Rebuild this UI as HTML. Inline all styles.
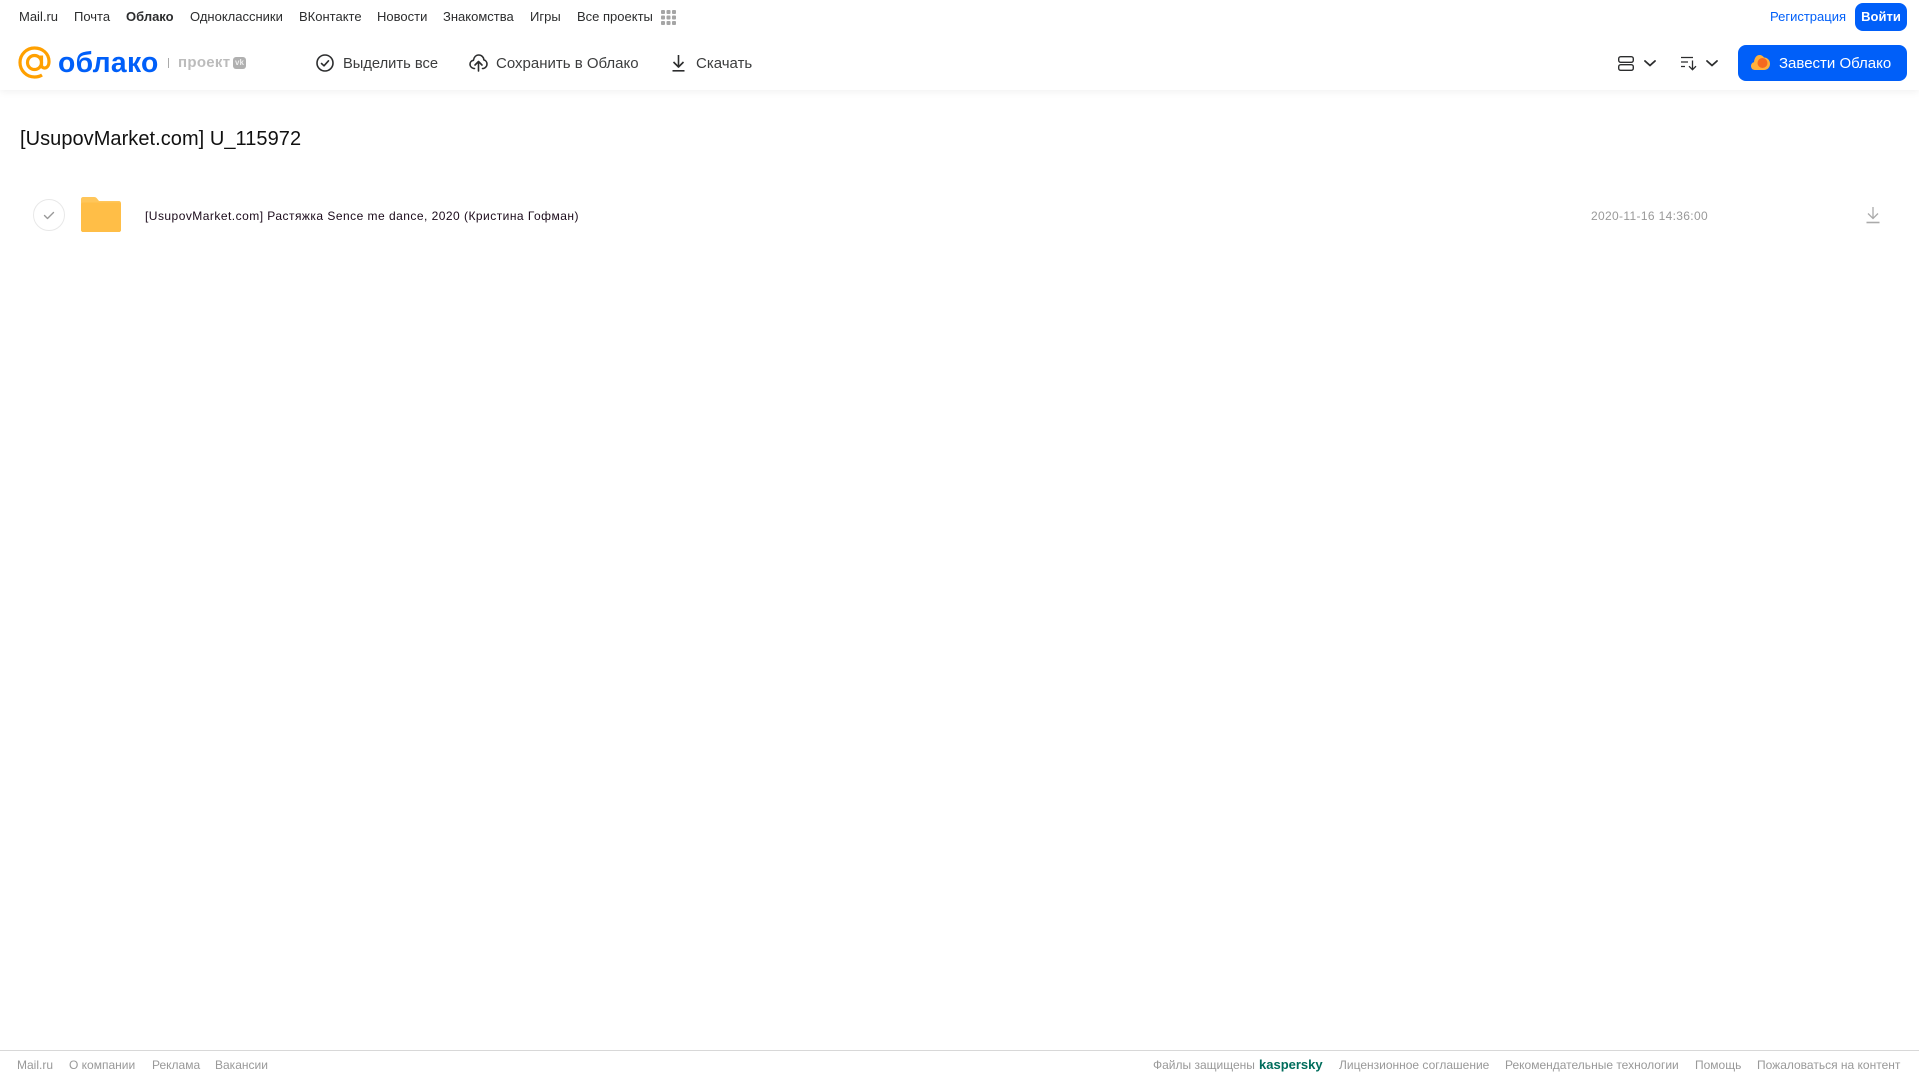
<!DOCTYPE html>
<html lang="ru">
<head>
<meta charset="utf-8">
<title>Облако</title>
<style>
html,body{margin:0;padding:0;background:#fff;width:1919px;height:1079px;overflow:hidden;font-family:"Liberation Sans",sans-serif;}
.t{position:absolute;white-space:nowrap;line-height:16px;}
.n{top:9px;font-size:13px;color:#2c2d2e;}
.a{top:55.500px;font-size:15px;color:#3c3d3e;}
.f{top:1057px;font-size:12px;color:#999;}
svg{position:absolute;overflow:visible;}
#hdr{position:absolute;left:0;top:0;width:1919px;height:90px;background:#fff;box-shadow:0 1px 8px rgba(0,0,0,.07);}
.btn{position:absolute;background:#005ff9;}
#fl{position:absolute;left:0;top:1050px;width:1919px;height:1px;background:#d8d8d8;}
</style>
</head>
<body>
<div id="hdr"></div>
<div class="t n" style="left:19px">Mail.ru</div>
<div class="t n" style="left:74px">Почта</div>
<div class="t n" style="left:126px;font-weight:bold">Облако</div>
<div class="t n" style="left:190px">Одноклассники</div>
<div class="t n" style="left:299px">ВКонтакте</div>
<div class="t n" style="left:377px">Новости</div>
<div class="t n" style="left:443px">Знакомства</div>
<div class="t n" style="left:530px">Игры</div>
<div class="t n" style="left:577px">Все проекты</div>
<svg style="left:661px;top:10px" width="15" height="15" viewBox="0 0 15 15" fill="#a5a5a5">
<rect x="0" y="0" width="4" height="4" rx="1"/><rect x="5.500" y="0" width="4" height="4" rx="1"/><rect x="11" y="0" width="4" height="4" rx="1"/>
<rect x="0" y="5.500" width="4" height="4" rx="1"/><rect x="5.500" y="5.500" width="4" height="4" rx="1"/><rect x="11" y="5.500" width="4" height="4" rx="1"/>
<rect x="0" y="11" width="4" height="4" rx="1"/><rect x="5.500" y="11" width="4" height="4" rx="1"/><rect x="11" y="11" width="4" height="4" rx="1"/>
</svg>
<div class="t n" style="left:1770px;color:#005ff9">Регистрация</div>
<div class="btn" style="left:1855px;top:3px;width:52px;height:28px;border-radius:8px"></div>
<div class="t n" style="left:1855px;width:52px;text-align:center;color:#fff;font-weight:bold">Войти</div>

<svg style="left:18px;top:46px" width="34" height="34" viewBox="0 0 34 34" fill="none" stroke="#ffa000" stroke-width="3.200">
<circle cx="16.500" cy="16.500" r="7"/>
<path d="M23.500 9.500V19c0 4.500 7.500 4.500 7.500-3.500C31 7.500 24.500 2 16.500 2S2 8.500 2 16.500 8.500 31 16.500 31c3 0 5.500-.7 7.500-2"/>
</svg>
<div class="t" style="left:58px;top:44px;font-size:28.300px;line-height:36px;font-weight:bold;color:#005ff9;letter-spacing:.3px">облако</div>
<div style="position:absolute;left:168px;top:58px;width:1px;height:10px;background:#aaa"></div>
<div class="t" style="left:178px;top:54.500px;font-size:15px;font-weight:bold;color:#bcbcbc;letter-spacing:.3px">проект</div>
<div style="position:absolute;left:233px;top:57px;width:13px;height:12px;border-radius:3px;background:#b0b0b0"></div>
<div class="t" style="left:233px;top:57px;width:13px;font-size:8px;line-height:12px;text-align:center;font-weight:bold;color:#eee">vk</div>

<svg style="left:316px;top:54px" width="18" height="18" viewBox="0 0 18 18" fill="none" stroke="#2c2d2e" stroke-width="1.600">
<circle cx="9" cy="9" r="8"/><path d="M5.500 9.500l2.500 2.300 4.500-5" stroke-linecap="round" stroke-linejoin="round"/>
</svg>
<div class="t a" style="left:343px;font-size:14.700px">Выделить все</div>
<svg style="left:469px;top:54px" width="19" height="18" viewBox="0 0 19 18" fill="none" stroke="#2c2d2e" stroke-width="1.600" stroke-linecap="round" stroke-linejoin="round">
<path d="M5.500 14.500H4.800C2.700 14 1 12.300 1 10.200c0-2 1.500-3.600 3.400-3.900C5 3.200 7 1 9.700 1c2.800 0 5 2.200 5.200 4.900 1.800.5 3.100 2.200 3.100 4.100 0 2.200-1.600 4-3.500 4.500h-1"/>
<path d="M9.500 17V8M6 11l3.500-3.500L13 11"/>
</svg>
<div class="t a" style="left:496px">Сохранить в Облако</div>
<svg style="left:671px;top:54px" width="15" height="18" viewBox="0 0 15 18" fill="none" stroke="#2c2d2e" stroke-width="1.600">
<path d="M7.500 1v11.500M2.500 8l5 5 5-5" stroke-linejoin="round"/><path d="M1.500 16.800h12"/>
</svg>
<div class="t a" style="left:696px">Скачать</div>

<svg style="left:1618px;top:56px" width="16" height="15" viewBox="0 0 16 15" fill="none" stroke="#2c2d2e" stroke-width="1.400">
<rect x=".7" y=".7" width="14.600" height="5.600" rx="2"/><rect x=".7" y="8.700" width="14.600" height="5.600" rx="2"/>
</svg>
<svg style="left:1644px;top:60px" width="12" height="7" viewBox="0 0 12 7" fill="none" stroke="#2c2d2e" stroke-width="1.800" stroke-linecap="round" stroke-linejoin="round"><path d="M1 1l5 4.500L11 1"/></svg>
<svg style="left:1681px;top:56px" width="16" height="15" viewBox="0 0 16 15" fill="none" stroke="#2c2d2e" stroke-width="1.300">
<path d="M0 1.500h12M0 6h7M0 10.500h4"/><path d="M11.500 4.500v9M8 10.200l3.500 3.500 3.500-3.500"/>
</svg>
<svg style="left:1706px;top:60px" width="12" height="7" viewBox="0 0 12 7" fill="none" stroke="#2c2d2e" stroke-width="1.800" stroke-linecap="round" stroke-linejoin="round"><path d="M1 1l5 4.500L11 1"/></svg>
<div class="btn" style="left:1738px;top:45px;width:169px;height:36px;border-radius:8px"></div>
<svg style="left:1751px;top:55px" width="19" height="15" viewBox="0 0 19 15">
<path d="M4 15C1.500 15 0 13.200 0 11c0-2 1.300-3.500 3-3.900C3.400 3 5.500 0 8.500 0c2 0 3.500 1 4.500 2.500 3.500 0 6 2.800 6 6.200 0 3.500-2.500 6.300-6 6.300z" fill="#ffb03a"/>
<circle cx="11.500" cy="8" r="5" fill="#f5691e"/>
</svg>
<div class="t" style="left:1779px;top:55.500px;font-size:15px;color:#fff">Завести Облако</div>

<div class="t" style="left:20px;top:127px;font-size:20px;line-height:24px;color:#111;letter-spacing:.05px">[UsupovMarket.com] U_115972</div>

<svg style="left:33px;top:199px" width="32" height="32" viewBox="0 0 32 32" fill="none">
<circle cx="16" cy="16" r="15.500" stroke="#e8e8e8"/>
<path d="M11.500 16.500l3 3 6-6" stroke="#999" stroke-width="1.400" stroke-linecap="round" stroke-linejoin="round"/>
</svg>
<svg style="left:81px;top:197px" width="40" height="35" viewBox="0 0 40 35">
<path d="M2 0h11c1.500 0 2.300.5 3 1.500L18 4h20c1.100 0 2 .9 2 2v27c0 1.100-.9 2-2 2H2c-1.100 0-2-.9-2-2V2C0 .9.900 0 2 0z" fill="#ffc65a"/>
<path d="M0 7.500C0 6.500.9 5.500 2 5.500h36c1.100 0 2 1 2 2V33c0 1.100-.9 2-2 2H2c-1.100 0-2-.9-2-2z" fill="#ffbe47"/>
</svg>
<div class="t" style="left:145px;top:208px;font-size:12px;letter-spacing:.47px;color:#1a0a1a">[UsupovMarket.com] Растяжка Sence me dance, 2020 (Кристина Гофман)</div>
<div class="t" style="left:1591px;top:208px;font-size:12px;letter-spacing:.34px;color:#999">2020-11-16 14:36:00</div>
<svg style="left:1866px;top:207px" width="14" height="17" viewBox="0 0 14 17" fill="none" stroke="#aaa" stroke-width="1.300">
<path d="M7 0v11M2 6.500l5 5 5-5"/><path d="M.5 15.500h13" stroke-width="1.600"/>
</svg>

<div id="fl"></div>
<div class="t f" style="left:17px">Mail.ru</div>
<div class="t f" style="left:69px">О компании</div>
<div class="t f" style="left:152px">Реклама</div>
<div class="t f" style="left:215px">Вакансии</div>
<div class="t f" style="left:1153px">Файлы защищены</div>
<div class="t f" style="left:1259px;font-weight:bold;font-size:13px;color:#006d5c">kaspersky</div>
<div class="t f" style="left:1339px">Лицензионное соглашение</div>
<div class="t f" style="left:1505px">Рекомендательные технологии</div>
<div class="t f" style="left:1695px">Помощь</div>
<div class="t f" style="left:1757px">Пожаловаться на контент</div>
</body>
</html>
